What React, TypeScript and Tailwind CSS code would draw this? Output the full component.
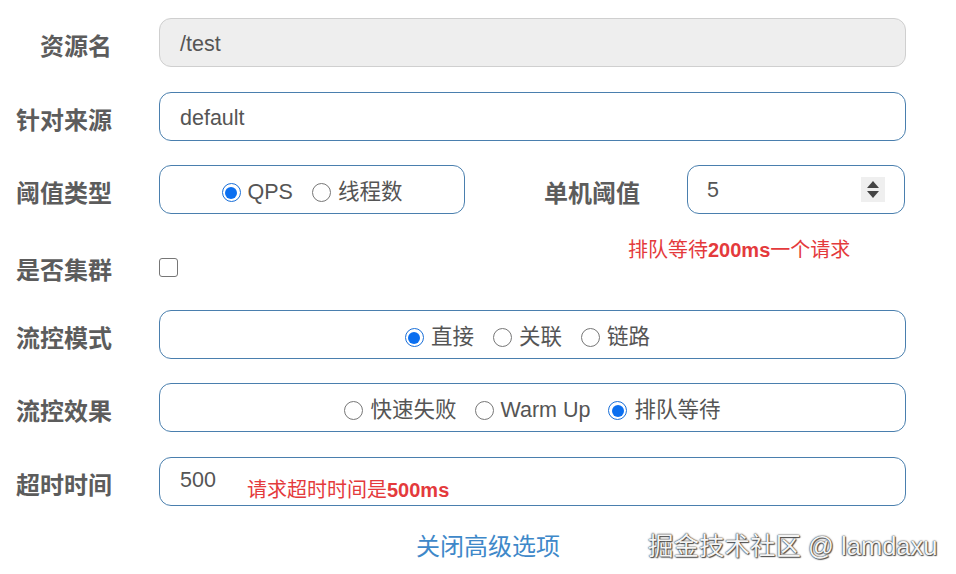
import type { ReactElement, ReactNode } from 'react';

const FONT = "font-['Liberation_Sans','Noto_Sans_CJK_SC',sans-serif]";

function Label({ children }: { children: ReactNode }): ReactElement {
  return (
    <div className="w-[112px] shrink-0 pt-[8px] text-right text-[24px] font-bold text-[#5c5c5c]">{children}</div>
  );
}

function Radio({ label, checked = false }: { label: string; checked?: boolean }): ReactElement {
  return (
    <span className="flex items-center gap-[7px]">
      {checked ? (
        <span className="flex h-[19px] w-[19px] items-center justify-center rounded-full border-[1.5px] border-[#1a6fd8] bg-white">
          <span className="h-[12px] w-[12px] rounded-full bg-[#0b6ff0]" />
        </span>
      ) : (
        <span className="h-[19px] w-[19px] rounded-full border border-[#777] bg-white" />
      )}
      <span>{label}</span>
    </span>
  );
}

function Box({ children, className = '' }: { children: ReactNode; className?: string }): ReactElement {
  return (
    <div
      className={`flex h-[49px] items-center rounded-[12px] border border-[#4a7fae] bg-white text-[21.5px] text-[#555] ${className}`}
    >
      {children}
    </div>
  );
}

export default function App(): ReactElement {
  return (
    <div className={`relative h-[574px] w-[956px] overflow-hidden bg-white ${FONT}`}>
      <div className="flex flex-col pt-[18px]">
        <div className="flex h-[49px] items-center">
          <Label>资源名</Label>
          <div className="ml-[47px] flex h-[49px] w-[747px] items-center rounded-[12px] border border-[#cfcfcf] bg-[#eeeeee] px-[20px] pt-[4px] text-[21.5px] text-[#555]">
            /test
          </div>
        </div>

        <div className="mt-[25px] flex h-[49px] items-center">
          <Label>针对来源</Label>
          <Box className="ml-[47px] w-[747px] px-[20px] pt-[4px]">default</Box>
        </div>

        <div className="mt-[24px] flex h-[49px] items-center">
          <Label>阈值类型</Label>
          <Box className="ml-[47px] w-[306px] justify-center gap-[19px] pt-[6px]">
            <Radio label="QPS" checked />
            <Radio label="线程数" />
          </Box>
          <div className="ml-[79px] w-[96px] pt-[8px] text-[24px] font-bold text-[#5c5c5c]">单机阈值</div>
          <Box className="ml-[47px] w-[218px] justify-between pl-[19px] pr-[19px]">
            <span className="pt-[2px]">5</span>
            <span className="flex h-[25px] w-[24px] flex-col items-center justify-center gap-[3px] bg-[#efefef]">
              <span className="h-0 w-0 border-x-[6px] border-b-[7px] border-x-transparent border-b-[#444]" />
              <span className="h-0 w-0 border-x-[6px] border-t-[7px] border-x-transparent border-t-[#444]" />
            </span>
          </Box>
        </div>

        <div className="mt-[29px] flex h-[48px] items-center">
          <Label>是否集群</Label>
          <span className="ml-[47px] h-[19px] w-[19px] rounded-[3px] border border-[#767676] bg-white" />
        </div>

        <div className="mt-[19px] flex h-[49px] items-center">
          <Label>流控模式</Label>
          <Box className="ml-[47px] w-[747px] justify-center gap-[19px] pr-[10px] pt-[6px]">
            <Radio label="直接" checked />
            <Radio label="关联" />
            <Radio label="链路" />
          </Box>
        </div>

        <div className="mt-[24px] flex h-[49px] items-center">
          <Label>流控效果</Label>
          <Box className="ml-[47px] w-[747px] justify-center gap-[18px] pt-[6px]">
            <Radio label="快速失败" />
            <Radio label="Warm Up" />
            <Radio label="排队等待" checked />
          </Box>
        </div>

        <div className="mt-[25px] flex h-[49px] items-center">
          <Label>超时时间</Label>
          <Box className="ml-[47px] w-[747px] px-[20px] pb-[2px]">500</Box>
        </div>

        <div className="mt-[26px] flex h-[30px] items-center pl-[416px] text-[24px] text-[#3e88c9]">
          关闭高级选项
        </div>
      </div>

      {/* annotations drawn over the form */}
      <div className="absolute left-[628px] top-[235px] text-[20px] text-[#e43a3c]">
        排队等待<span className="font-bold">200ms</span>一个请求
      </div>
      <div className="absolute left-[247px] top-[475px] text-[20px] text-[#e43a3c]">
        请求超时时间是<span className="font-bold">500ms</span>
      </div>
      <div className="absolute left-[648px] top-[527px] text-[25.5px] text-[#f4f4f4] [text-shadow:0_0_1px_#333,0_0_2px_#444,1px_1px_1px_#555]">
        掘金技术社区 @ lamdaxu
      </div>
    </div>
  );
}
